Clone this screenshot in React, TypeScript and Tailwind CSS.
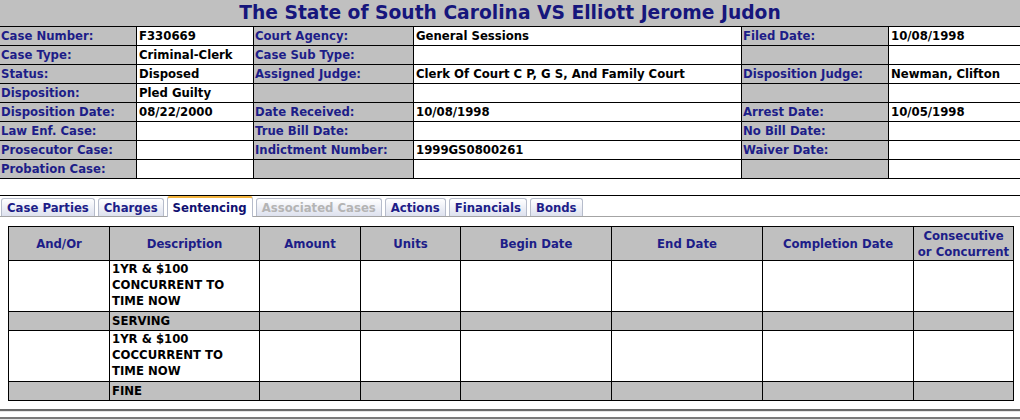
const infoRows: [string, string, string, string, string, string][] = [
  ["Case Number:", "F330669", "Court Agency:", "General Sessions", "Filed Date:", "10/08/1998"],
  ["Case Type:", "Criminal-Clerk", "Case Sub Type:", "", "", ""],
  ["Status:", "Disposed", "Assigned Judge:", "Clerk Of Court C P, G S, And Family Court", "Disposition Judge:", "Newman, Clifton"],
  ["Disposition:", "Pled Guilty", "", "", "", ""],
  ["Disposition Date:", "08/22/2000", "Date Received:", "10/08/1998", "Arrest Date:", "10/05/1998"],
  ["Law Enf. Case:", "", "True Bill Date:", "", "No Bill Date:", ""],
  ["Prosecutor Case:", "", "Indictment Number:", "1999GS0800261", "Waiver Date:", ""],
  ["Probation Case:", "", "", "", "", ""],
]

const tabs = [
  { name: "Case Parties" },
  { name: "Charges" },
  { name: "Sentencing", active: true },
  { name: "Associated Cases", disabled: true },
  { name: "Actions" },
  { name: "Financials" },
  { name: "Bonds" },
]

const headers = ["And/Or", "Description", "Amount", "Units", "Begin Date", "End Date", "Completion Date", "Consecutive or Concurrent"]

const sentences = [
  { desc: "1YR & $100 CONCURRENT TO TIME NOW", extra: "SERVING" },
  { desc: "1YR & $100 COCCURRENT TO TIME NOW", extra: "FINE" },
]

export default function App() {
  return (
    <div className="w-[1020px] h-[420px] overflow-hidden bg-white font-['DejaVu_Sans',sans-serif] font-bold text-[11.7px] text-black">
      {/* case header */}
      <div className="grid grid-cols-[137px_117px_160px_328px_147px_131px]">
        <div className="col-span-6 h-[27px] bg-[#c0c0c0] border-b border-black flex items-center justify-center text-[18.7px] leading-none text-[#16167c] pt-[1px]">
          The State of South Carolina VS Elliott Jerome Judon
        </div>
        {infoRows.map((row, i) =>
          row.map((cell, j) => {
            const isLabel = j % 2 === 0
            return (
              <div
                key={i + "-" + j}
                className={
                  "h-[19px] border-b border-black leading-[19px] whitespace-nowrap overflow-hidden " +
                  (j < 5 ? "border-r " : "") +
                  (isLabel ? "bg-[#c0c0c0] text-[#1d1d88] pl-[1px]" : "bg-white pl-[2px]")
                }
              >
                {cell}
              </div>
            )
          })
        )}
      </div>

      {/* tabs */}
      <div className="mt-[16px] border-t border-black">
        <div className="flex items-end gap-[3px] pl-[1px] h-[21px] border-b border-[#a4a4a4]">
          {tabs.map((t) =>
            t.active ? (
              <div
                key={t.name}
                className="h-[21px] px-[5px] border-x border-[#b6bccb] border-t-2 border-t-[#f2b33d] rounded-t-[3px] bg-white text-[#101070] leading-[21px] -mb-[1px]"
              >
                {t.name}
              </div>
            ) : (
              <div
                key={t.name}
                className={
                  "h-[18px] px-[5px] border border-b-0 border-[#b6bccb] rounded-t-[3px] bg-linear-to-b from-white to-[#dde1ee] leading-[19px] " +
                  (t.disabled ? "text-[#b4b4b4]" : "text-[#1d1d88]")
                }
              >
                {t.name}
              </div>
            )
          )}
        </div>
      </div>

      {/* sentencing */}
      <div className="ml-[8px] mt-[9px] w-[1006px] grid grid-cols-[101px_150px_101px_100px_151px_151px_151px_100px] border-l border-t border-black">
        {headers.map((h) => (
          <div
            key={h}
            className="h-[34px] bg-[#c0c0c0] border-r border-b border-black flex items-center justify-center text-center text-[#1d1d88] leading-[16px] px-[3px]"
          >
            {h}
          </div>
        ))}
        {sentences.map((s, i) => (
          <div key={i} className="contents">
            {headers.map((_, j) => (
              <div key={"a" + j} className="h-[51px] bg-white border-r border-b border-black pl-[2px] pr-[4px] leading-[16px]">
                {j === 1 ? s.desc : ""}
              </div>
            ))}
            {headers.map((_, j) => (
              <div key={"b" + j} className="h-[19px] bg-[#c0c0c0] border-r border-b border-black pl-[2px] leading-[19px]">
                {j === 1 ? s.extra : ""}
              </div>
            ))}
          </div>
        ))}
      </div>

      <div className="mt-[8px] border-t-2 border-t-[#6a6a6a] border-b border-b-[#e4e4e4]" />
      <div className="mt-[5px] border-t-2 border-t-[#7a7a7a] border-b border-b-[#e4e4e4]" />
    </div>
  )
}
